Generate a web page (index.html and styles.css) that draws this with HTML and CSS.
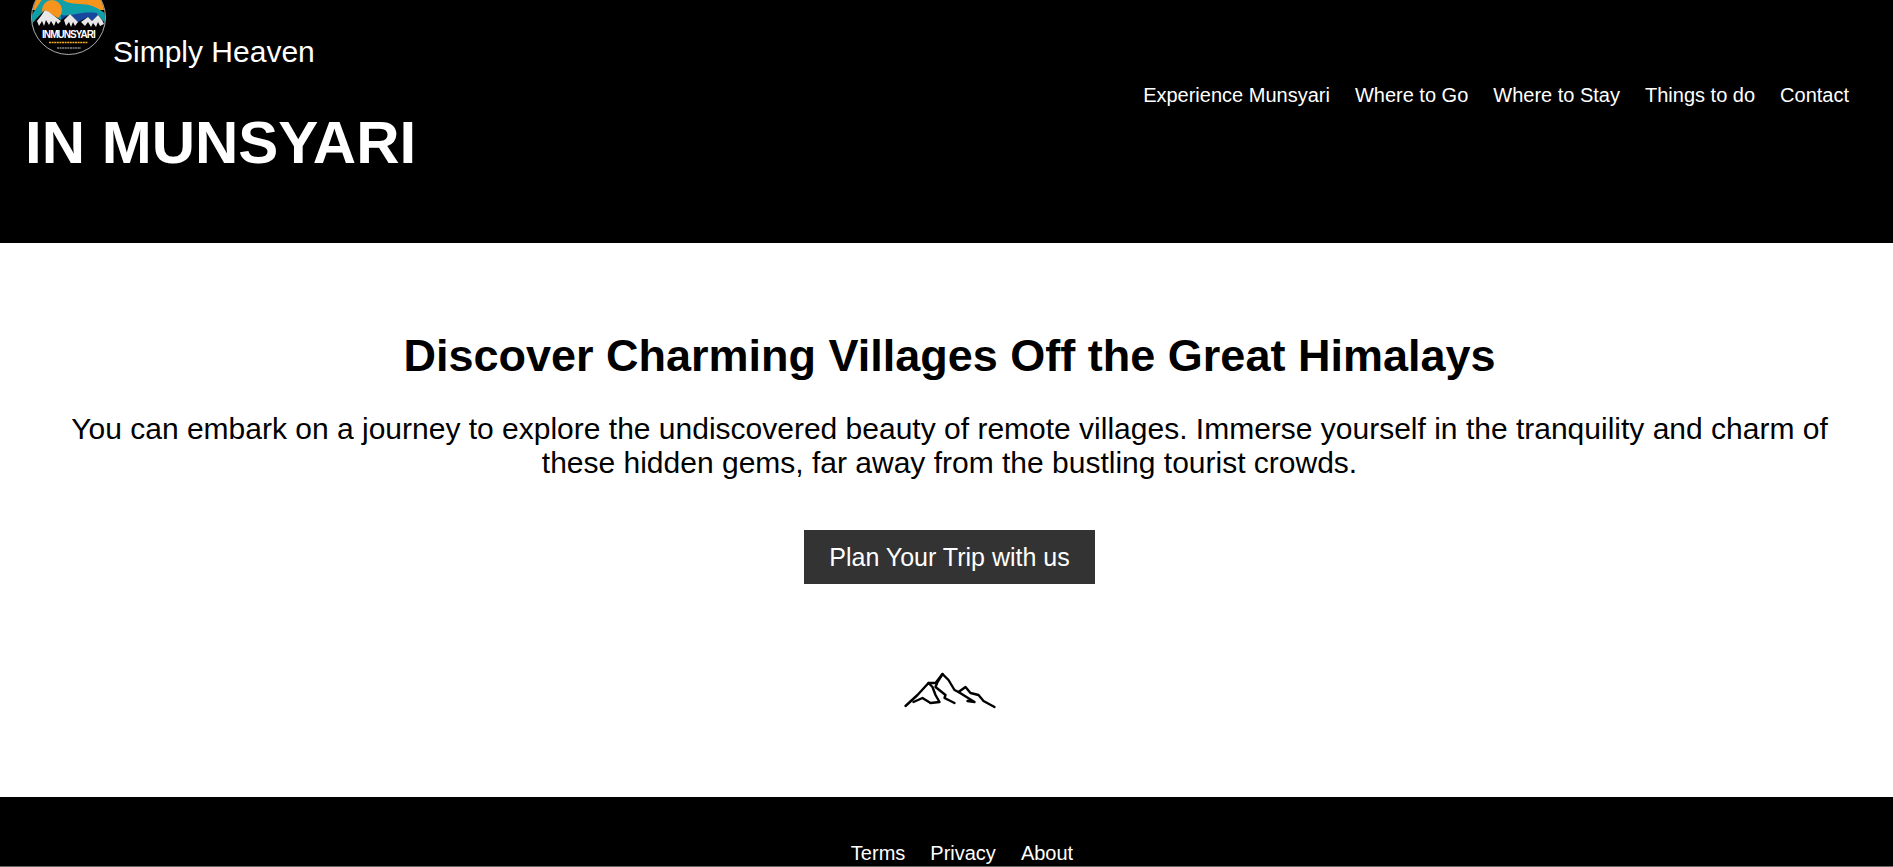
FILE: index.html
```html
<!DOCTYPE html>
<html lang="en">
<head>
  <meta charset="UTF-8">
  <title>In Munsyari</title>
  <link rel="stylesheet" href="styles.css">
</head>
<body>

  <header class="site-header">
    <div class="brand">
      <div class="brand-top">
        <svg class="logo" viewBox="0 20 75 55" aria-label="Inmunsyari logo">
          <defs>
            <clipPath id="logoClip"><circle cx="37.5" cy="37.5" r="36.5"/></clipPath>
          </defs>
          <circle cx="37.5" cy="37.5" r="37" fill="#000"/>
          <g clip-path="url(#logoClip)">
            <rect x="0" y="0" width="75" height="30" fill="#f7941d"/>
            <path d="M0 36 L12 18 H29 C38 26 50 23 58 25 C65 27 70 30 75 34 V50 H0 Z" fill="#0f9fa8"/>
            <circle cx="21" cy="30" r="10" fill="#f7941d"/>
            <path d="M30 35 C40 37 48 31 66 33 L70 44 H30 Z" fill="#17479e"/>
            <path d="M0 54 V45 L6 38 L14 30 L22 35 L30 40 L39 34 L47 42 L57 37 L61 41 L67 35 L75 44 V54 Z" fill="#000"/>
            <path d="M6 41 L10 36 L14 30 L18 32 L22 35 L26 38 L30 41 L27 44 L25 41 L23 46 L20 41 L18 45 L15 40 L13 46 L11 41 L8 46 Z M33 40 L39 34 L43 38 L47 42 L44 46 L42 42 L40 47 L38 42 L35 46 Z M50 42 L57 37 L61 41 L64 38 L67 35 L71 40 L73 44 L69 46 L67 42 L65 47 L62 43 L60 47 L57 42 L54 46 Z" fill="#e8e8e8"/>
          </g>
          <text class="logo-name" x="37.5" y="58">INMUNSYARI</text>
          <line class="logo-tagline" x1="18" y1="62.5" x2="57" y2="62.5"/>
          <line class="logo-place" x1="26" y1="68" x2="50" y2="68"/>
          <circle cx="37.5" cy="37.5" r="37" fill="none" stroke="#d8d8d8" stroke-width="0.8"/>
        </svg>
        <span class="tagline">Simply Heaven</span>
      </div>
      <h1 class="brand-name">IN MUNSYARI</h1>
    </div>
    <nav class="main-nav">
      <a href="#">Experience Munsyari</a>
      <a href="#">Where to Go</a>
      <a href="#">Where to Stay</a>
      <a href="#">Things to do</a>
      <a href="#">Contact</a>
    </nav>
  </header>

  <main class="intro">
    <h2>Discover Charming Villages Off the Great Himalays</h2>
    <p>You can embark on a journey to explore the undiscovered beauty of remote villages. Immerse yourself in the tranquility and charm of these hidden gems, far away from the bustling tourist crowds.</p>
    <a class="btn" href="#">Plan Your Trip with us</a>
    <svg class="mountain" viewBox="4.5 0 130 60" aria-hidden="true">
      <path d="M25 46 L37 35 L48 23 L52 27 L55 35 L59 42 L50 43 L42 38 L33 42"/>
      <path d="M48 23 L55 23 L62 14 L68 20 L74 30 L78 32 L85 27 L90 33 L98 35 L103 41 L114 47"/>
      <path d="M62 14 L57 22 L55 27 L65 35 L64 38 L74 43"/>
      <path d="M78 32 L94 42 L87 41"/>
    </svg>
  </main>

  <footer class="site-footer">
    <a href="#">Terms</a>
    <a href="#">Privacy</a>
    <a href="#">About</a>
  </footer>

</body>
</html>
```

FILE: styles.css
```css
body {
  font-family: "Liberation Sans", Arial, sans-serif;
  margin: 0;
  background-color: #fff;
  color: #000;
  height: 867px;
  overflow: hidden;
}
a {
  color: inherit;
  text-decoration: none;
}

.site-header {
  display: flex;
  justify-content: space-between;
  align-items: flex-start;
  height: 243px;
  background-color: #000;
  color: #fff;
  padding: 0 44px 0 25px;
  box-sizing: border-box;
}
.brand-top {
  display: flex;
  align-items: flex-end;
  margin-left: 6px;
}
.logo {
  width: 75px;
  height: 55px;
  flex-shrink: 0;
}
.logo-name {
  font-family: "Liberation Sans", Arial, sans-serif;
  font-size: 10px;
  font-weight: 700;
  letter-spacing: -0.95px;
  fill: #fff;
  text-anchor: middle;
}
.logo-tagline {
  stroke: #f7a823;
  stroke-width: 1.6;
  stroke-dasharray: 2 0.6;
}
.logo-place {
  stroke: #ccc;
  stroke-width: 1.2;
  stroke-dasharray: 2 0.6;
}
.tagline {
  font-size: 30px;
  margin-left: 7px;
  margin-bottom: -14px;
  line-height: 34px;
}
.brand-name {
  font-size: 60px;
  line-height: 69px;
  margin: 53px 0 0;
}
.main-nav {
  display: flex;
  gap: 25px;
  font-size: 20px;
  line-height: 23px;
  margin-top: 84px;
}

.intro {
  display: flex;
  flex-direction: column;
  align-items: center;
  height: 554px;
  padding: 0 59px 0 65px;
  box-sizing: border-box;
  text-align: center;
}
.intro h2 {
  font-size: 45px;
  line-height: 51px;
  margin: 87px 0 0;
}
.intro p {
  font-size: 30px;
  line-height: 34px;
  margin: 31px 0 0;
}
.btn {
  background-color: #333;
  color: #fff;
  font-size: 25px;
  line-height: 28px;
  padding: 13px 25px;
  margin-top: 50px;
}
.mountain {
  width: 130px;
  height: 60px;
  margin-top: 76px;
  fill: none;
  stroke: #000;
  stroke-width: 2.4;
  stroke-linejoin: round;
  stroke-linecap: round;
}

.site-footer {
  display: flex;
  justify-content: center;
  gap: 25px;
  height: 70px;
  box-sizing: border-box;
  background-color: #000;
  color: #fff;
  font-size: 20px;
  line-height: 23px;
  padding: 45px 0 0 31px;
  border-bottom: 1px solid #666;
}
```
